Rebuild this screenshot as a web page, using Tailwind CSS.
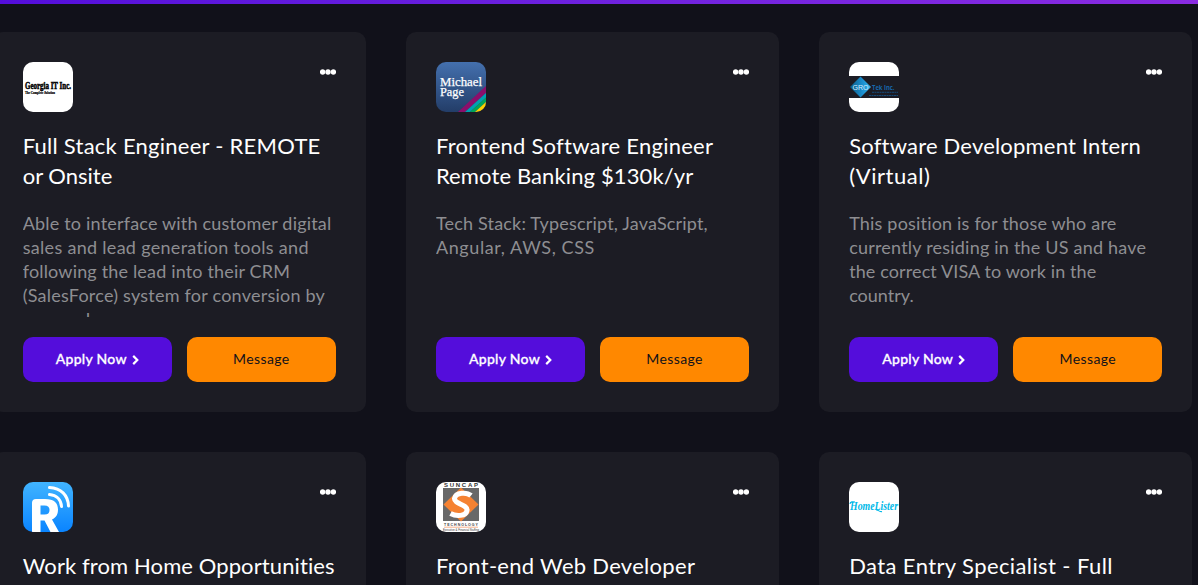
<!DOCTYPE html>
<html lang="en">
<head>
<meta charset="utf-8">
<title>Jobs</title>
<script src="https://cdn.jsdelivr.net/npm/@tailwindcss/browser@4"></script>
</head>
<body class="h-[585px] overflow-hidden bg-[#11111a] font-['Lato','Open_Sans',sans-serif] text-white">
<div class="h-1 bg-linear-to-r from-[#540ddb] to-[#8a2be2]"></div>
<main class="mt-7 -ml-[7.3px] grid w-[1199.7px] grid-cols-3 gap-10 whitespace-nowrap">

<article class="flex h-[380px] flex-col rounded-[10px] bg-[#1c1c24] p-[30px]">
  <header class="flex items-start justify-between">
    <svg class="size-[50px] rounded-[10px] bg-white" viewBox="0 0 50 50">
      <text x="2" y="27" font-family="Liberation Serif" font-weight="700" font-size="9.5" textLength="46" lengthAdjust="spacingAndGlyphs" fill="#000" stroke="#000" stroke-width=".5">Georgia IT Inc.</text>
      <text x="2" y="31.5" font-family="Liberation Serif" font-weight="700" font-size="3.6" textLength="30" lengthAdjust="spacingAndGlyphs" fill="#000" stroke="#000" stroke-width=".2">The Complete Solution</text>
    </svg>
    <svg class="mt-[7px] h-[6px] w-4" viewBox="0 0 16 6" fill="#fff"><circle cx="2.6" cy="3" r="2.7"/><circle cx="8" cy="3" r="2.7"/><circle cx="13.4" cy="3" r="2.7"/></svg>
  </header>
  <h2 class="mt-[19px] h-[60px] text-[22px] leading-[30px]"><span class="block tracking-[0.25px]">Full Stack Engineer - REMOTE</span><span class="block">or Onsite</span></h2>
  <p class="mt-5 h-[106px] overflow-hidden text-[18px] leading-6 text-[#8e8e92]"><span class="block tracking-[0.19px]">Able to interface with customer digital</span><span class="block tracking-[0.3px]">sales and lead generation tools and</span><span class="block tracking-[0.17px]">following the lead into their CRM</span><span class="block tracking-[0.23px]">(SalesForce) system for conversion by</span><span class="block">we need</span></p>
  <div class="mt-5 grid h-[45px] shrink-0 grid-cols-2 gap-[15px] text-[14px]">
    <button class="flex items-center justify-center gap-[5px] rounded-[10px] bg-[#540ddb] font-medium"><span class="pb-0.5 tracking-[0.28px] [-webkit-text-stroke:0.3px_white]">Apply Now</span><svg class="mt-px h-[10px] w-[7px]" viewBox="0 0 7 10" fill="none" stroke="#fff" stroke-width="2.2"><path d="M1.2 .9 5.3 5 1.2 9.1"/></svg></button>
    <button class="rounded-[10px] bg-[#ff8800] pb-0.5 tracking-[0.4px] text-[#11111a]">Message</button>
  </div>
</article>

<article class="flex h-[380px] flex-col rounded-[10px] bg-[#1c1c24] p-[30px]">
  <header class="flex items-start justify-between">
    <svg class="size-[50px] rounded-[10px]" viewBox="0 0 50 50">
      <defs><linearGradient id="mp" x2="0" y2="1"><stop stop-color="#4470ae"/><stop offset="1" stop-color="#233d68"/></linearGradient></defs>
      <path fill="url(#mp)" d="M0 0h50v50H0z"/>
      <path fill="#8b0f6b" d="M22 50 50 24v7L29 50z"/><path fill="#00a0b0" d="M29 50 50 31v4.500L34 50z"/><path fill="#00a55a" d="M34 50 50 35.500v4.500L39 50z"/><path fill="#ffd200" d="M39 50 50 40v5.500L45 50z"/><path fill="#ef7d00" d="M45 50l5-4.500V50z"/>
      <text x="4" y="23.500" font-family="Liberation Serif" font-size="13.500" textLength="42" lengthAdjust="spacingAndGlyphs" fill="#fff" stroke="#fff" stroke-width=".25">Michael</text>
      <text x="4" y="33.500" font-family="Liberation Serif" font-size="13.500" textLength="24" lengthAdjust="spacingAndGlyphs" fill="#fff" stroke="#fff" stroke-width=".25">Page</text>
    </svg>
    <svg class="mt-[7px] h-[6px] w-4" viewBox="0 0 16 6" fill="#fff"><circle cx="2.6" cy="3" r="2.7"/><circle cx="8" cy="3" r="2.7"/><circle cx="13.4" cy="3" r="2.7"/></svg>
  </header>
  <h2 class="mt-[19px] h-[60px] text-[22px] leading-[30px]"><span class="block tracking-[0.25px]">Frontend Software Engineer</span><span class="block tracking-[0.12px]">Remote Banking $130k/yr</span></h2>
  <p class="mt-5 h-[106px] overflow-hidden text-[18px] leading-6 text-[#8e8e92]"><span class="block tracking-[0.18px]">Tech Stack: Typescript, JavaScript,</span><span class="block tracking-[0.61px]">Angular, AWS, CSS</span></p>
  <div class="mt-5 grid h-[45px] shrink-0 grid-cols-2 gap-[15px] text-[14px]">
    <button class="flex items-center justify-center gap-[5px] rounded-[10px] bg-[#540ddb] font-medium"><span class="pb-0.5 tracking-[0.28px] [-webkit-text-stroke:0.3px_white]">Apply Now</span><svg class="mt-px h-[10px] w-[7px]" viewBox="0 0 7 10" fill="none" stroke="#fff" stroke-width="2.2"><path d="M1.2 .9 5.3 5 1.2 9.1"/></svg></button>
    <button class="rounded-[10px] bg-[#ff8800] pb-0.5 tracking-[0.4px] text-[#11111a]">Message</button>
  </div>
</article>

<article class="flex h-[380px] flex-col rounded-[10px] bg-[#1c1c24] p-[30px]">
  <header class="flex items-start justify-between">
    <svg class="size-[50px] rounded-[10px] bg-white" viewBox="0 0 50 50">
      <defs><linearGradient id="gt"><stop stop-color="#0b5c86"/><stop offset=".6" stop-color="#1b8fd0"/><stop offset="1" stop-color="#35b5ea"/></linearGradient></defs>
      <path fill="#1c1c24" d="M0 14h50v22H0z"/>
      <path fill="url(#gt)" d="M11.500 14.500 22 25 11.500 35.500 1 25z"/>
      <text x="3.500" y="28" font-family="Liberation Sans" font-size="8" textLength="16" lengthAdjust="spacingAndGlyphs" fill="#d8efff">GRO</text>
      <text x="23" y="27.500" font-family="Open Sans" font-weight="700" font-size="6.500" textLength="22.500" lengthAdjust="spacingAndGlyphs" fill="#1767ad">Tek Inc.</text>
      <path stroke="#174a78" stroke-width="1" stroke-dasharray="2 .5" d="M23 30.300h26M20 33.500h29"/>
    </svg>
    <svg class="mt-[7px] h-[6px] w-4" viewBox="0 0 16 6" fill="#fff"><circle cx="2.6" cy="3" r="2.7"/><circle cx="8" cy="3" r="2.7"/><circle cx="13.4" cy="3" r="2.7"/></svg>
  </header>
  <h2 class="mt-[19px] h-[60px] text-[22px] leading-[30px]"><span class="block tracking-[0.2px]">Software Development Intern</span><span class="block tracking-[0.56px]">(Virtual)</span></h2>
  <p class="mt-5 h-[106px] overflow-hidden text-[18px] leading-6 text-[#8e8e92]"><span class="block tracking-[0.19px]">This position is for those who are</span><span class="block tracking-[0.21px]">currently residing in the US and have</span><span class="block tracking-[0.11px]">the correct VISA to work in the</span><span class="block">country.</span></p>
  <div class="mt-5 grid h-[45px] shrink-0 grid-cols-2 gap-[15px] text-[14px]">
    <button class="flex items-center justify-center gap-[5px] rounded-[10px] bg-[#540ddb] font-medium"><span class="pb-0.5 tracking-[0.28px] [-webkit-text-stroke:0.3px_white]">Apply Now</span><svg class="mt-px h-[10px] w-[7px]" viewBox="0 0 7 10" fill="none" stroke="#fff" stroke-width="2.2"><path d="M1.2 .9 5.3 5 1.2 9.1"/></svg></button>
    <button class="rounded-[10px] bg-[#ff8800] pb-0.5 tracking-[0.4px] text-[#11111a]">Message</button>
  </div>
</article>

<article class="flex h-[380px] flex-col rounded-[10px] bg-[#1c1c24] p-[30px]">
  <header class="flex items-start justify-between">
    <svg class="size-[50px] rounded-[10px]" viewBox="0 0 50 50">
      <defs><linearGradient id="rr" x2="0" y2="1"><stop stop-color="#41b4ff"/><stop offset="1" stop-color="#0a84ff"/></linearGradient></defs>
      <path fill="url(#rr)" d="M0 0h50v50H0z"/>
      <path fill="#fff" fill-rule="evenodd" d="M9 50V21q0-4 4-4h9c9 0 13 4 13 10.500 0 5-2 8-6 10L36 50h-8.500l-6-11.500h-4V50zM17.500 23.500v9h4c3.500 0 5-1.500 5-4.500s-1.500-4.500-5-4.500z"/>
      <g fill="none" stroke="#fff" stroke-width="3" stroke-linecap="round"><path d="M26.500 5.500C38 6 45 13 45.500 24"/><path d="M26.500 12.500C33.500 13 38 17.500 38.500 24.500"/></g>
    </svg>
    <svg class="mt-[7px] h-[6px] w-4" viewBox="0 0 16 6" fill="#fff"><circle cx="2.6" cy="3" r="2.7"/><circle cx="8" cy="3" r="2.7"/><circle cx="13.4" cy="3" r="2.7"/></svg>
  </header>
  <h2 class="mt-[19px] text-[22px] leading-[30px] tracking-[0.1px]">Work from Home Opportunities</h2>
</article>

<article class="flex h-[380px] flex-col rounded-[10px] bg-[#1c1c24] p-[30px]">
  <header class="flex items-start justify-between">
    <svg class="size-[50px] rounded-[10px] bg-white" viewBox="0 0 50 50">
      <text x="8" y="4.500" font-family="Liberation Sans" font-weight="700" font-size="6" textLength="34" fill="#333">SUNCAP</text>
      <path fill="#686868" d="M7 6h36v33H7z"/>
      <path fill="#f58232" d="M25 5.500 42.500 22.500 25 39.500 7.500 22.500z"/>
      <path fill="none" stroke="#fff" stroke-width="5" d="M35 13.500C31 10 19.500 10 18.500 16.500c-.5 5.500 13.500 6 12.500 12-1 6-11 6-16.500 3"/>
      <text x="8" y="43.700" font-family="Liberation Sans" font-weight="700" font-size="3.600" textLength="34" fill="#444">TECHNOLOGY</text>
      <path stroke="#f5a070" stroke-width=".8" d="M8 45.200h34"/>
      <text x="7" y="49.300" font-family="Liberation Sans" font-size="3.200" textLength="36" lengthAdjust="spacingAndGlyphs" fill="#333">Executive &amp; Financial Staffing</text>
    </svg>
    <svg class="mt-[7px] h-[6px] w-4" viewBox="0 0 16 6" fill="#fff"><circle cx="2.6" cy="3" r="2.7"/><circle cx="8" cy="3" r="2.7"/><circle cx="13.4" cy="3" r="2.7"/></svg>
  </header>
  <h2 class="mt-[19px] text-[22px] leading-[30px] tracking-[0.29px]">Front-end Web Developer</h2>
</article>

<article class="flex h-[380px] flex-col rounded-[10px] bg-[#1c1c24] p-[30px]">
  <header class="flex items-start justify-between">
    <svg class="size-[50px] rounded-[10px] bg-white" viewBox="0 0 50 50">
      <text x="1" y="28" font-family="Liberation Serif" font-style="italic" font-weight="700" font-size="13" textLength="48" lengthAdjust="spacingAndGlyphs" fill="#00b9e8">HomeLister</text>
      <path fill="none" stroke="#00b9e8" stroke-width="1.200" d="M1 22c0-2.500 3-2.500 5-2M27 28c2-1 3 2.500 6 1.500"/>
    </svg>
    <svg class="mt-[7px] h-[6px] w-4" viewBox="0 0 16 6" fill="#fff"><circle cx="2.6" cy="3" r="2.7"/><circle cx="8" cy="3" r="2.7"/><circle cx="13.4" cy="3" r="2.7"/></svg>
  </header>
  <h2 class="mt-[19px] text-[22px] leading-[30px] tracking-[0.4px]">Data Entry Specialist - Full</h2>
</article>

</main>
</body>
</html>
